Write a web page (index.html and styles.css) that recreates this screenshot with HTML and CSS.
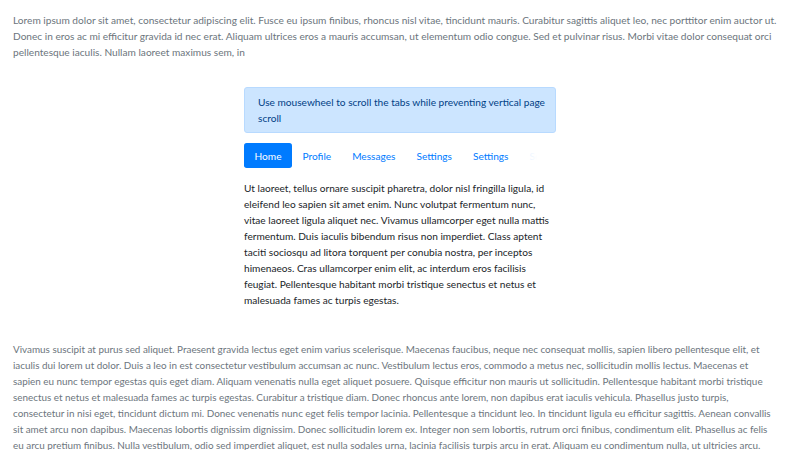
FILE: index.html
```html
<!DOCTYPE html>
<html lang="en">
<head>
<meta charset="utf-8">
<title>Scrollable tabs</title>
<link rel="stylesheet" href="styles.css">
</head>
<body>
<p class="muted intro">Lorem ipsum dolor sit amet, consectetur adipiscing elit. Fusce eu ipsum finibus, rhoncus nisl vitae, tincidunt mauris. Curabitur sagittis aliquet leo, nec porttitor enim auctor ut. Donec in eros ac mi efficitur gravida id nec erat. Aliquam ultrices eros a mauris accumsan, ut elementum odio congue. Sed et pulvinar risus. Morbi vitae dolor consequat orci pellentesque iaculis. Nullam laoreet maximus sem, in</p>

<div class="demo">
  <div class="alert">Use mousewheel to scroll the tabs while preventing vertical page scroll</div>
  <div class="tabs-wrap">
    <nav class="tabs">
      <a class="tab active">Home</a>
      <a class="tab">Profile</a>
      <a class="tab">Messages</a>
      <a class="tab">Settings</a>
      <a class="tab">Settings</a>
      <a class="tab">Settings</a>
      <a class="tab">Settings</a>
    </nav>
    <div class="fade"></div>
  </div>
  <p class="content">Ut laoreet, tellus ornare suscipit pharetra, dolor nisl fringilla ligula, id eleifend leo sapien sit amet enim. Nunc volutpat fermentum nunc, vitae laoreet ligula aliquet nec. Vivamus ullamcorper eget nulla mattis fermentum. Duis iaculis bibendum risus non imperdiet. Class aptent taciti sociosqu ad litora torquent per conubia nostra, per inceptos himenaeos. Cras ullamcorper enim elit, ac interdum eros facilisis feugiat. Pellentesque habitant morbi tristique senectus et netus et malesuada fames ac turpis egestas.</p>
</div>

<p class="muted outro">Vivamus suscipit at purus sed aliquet. Praesent gravida lectus eget enim varius scelerisque. Maecenas faucibus, neque nec consequat mollis, sapien libero pellentesque elit, et<br>
iaculis dui lorem ut dolor. Duis a leo in est consectetur vestibulum accumsan ac nunc. Vestibulum lectus eros, commodo a metus nec, sollicitudin mollis lectus. Maecenas et<br>
sapien eu nunc tempor egestas quis eget diam. Aliquam venenatis nulla eget aliquet posuere. Quisque efficitur non mauris ut sollicitudin. Pellentesque habitant morbi tristique<br>
senectus et netus et malesuada fames ac turpis egestas. Curabitur a tristique diam. Donec rhoncus ante lorem, non dapibus erat iaculis vehicula. Phasellus justo turpis,<br>
consectetur in nisi eget, tincidunt dictum mi. Donec venenatis nunc eget felis tempor lacinia. Pellentesque a tincidunt leo. In tincidunt ligula eu efficitur sagittis. Aenean convallis<br>
sit amet arcu non dapibus. Maecenas lobortis dignissim dignissim. Donec sollicitudin lorem ex. Integer non sem lobortis, rutrum orci finibus, condimentum elit. Phasellus ac felis<br>
eu arcu pretium finibus. Nulla vestibulum, odio sed imperdiet aliquet, est nulla sodales urna, lacinia facilisis turpis arcu in erat. Aliquam eu condimentum nulla, ut ultricies arcu.<br>
Sed vehicula lobortis ipsum, quis porttitor ligula ullamcorper eget. Nam efficitur dignissim urna, vitae iaculis nisi molestie.</p>
</body>
</html>
```

FILE: styles.css
```css
html, body {
  margin: 0;
  background: #ffffff;
}

body {
  padding: 12px 13px;
  font-family: Lato, "Open Sans", sans-serif;
  font-size: 10.15px;
  line-height: 16px;
  color: #212529;
}

p {
  margin: 0;
}

.muted {
  color: #6c757d;
}

.intro {
  margin-bottom: 27px;
}

.demo {
  width: 312px;
  margin: 0 auto;
}

.alert {
  background: #cce5ff;
  border: 1px solid #b8daff;
  color: #004085;
  border-radius: 3px;
  padding: 6px 8px 6px 13px;
  margin-bottom: 10px;
}

.tabs-wrap {
  position: relative;
  overflow: hidden;
}

.tabs {
  display: flex;
  flex-wrap: nowrap;
  white-space: nowrap;
}

.tab {
  display: block;
  padding: 4.5px 10.5px;
  color: #007bff;
  border-radius: 2.7px;
  flex: none;
}

.tab.active {
  background: #007bff;
  color: #ffffff;
}

.fade {
  position: absolute;
  top: 0;
  right: 0;
  bottom: 0;
  width: 46px;
  background: linear-gradient(to right, rgba(255,255,255,0), rgba(255,255,255,0.85) 30%, #ffffff 60%);
}

.content {
  margin-top: 12px;
}

.outro {
  margin-top: 33px;
  font-size: 9.9px;
  white-space: nowrap;
}
```
